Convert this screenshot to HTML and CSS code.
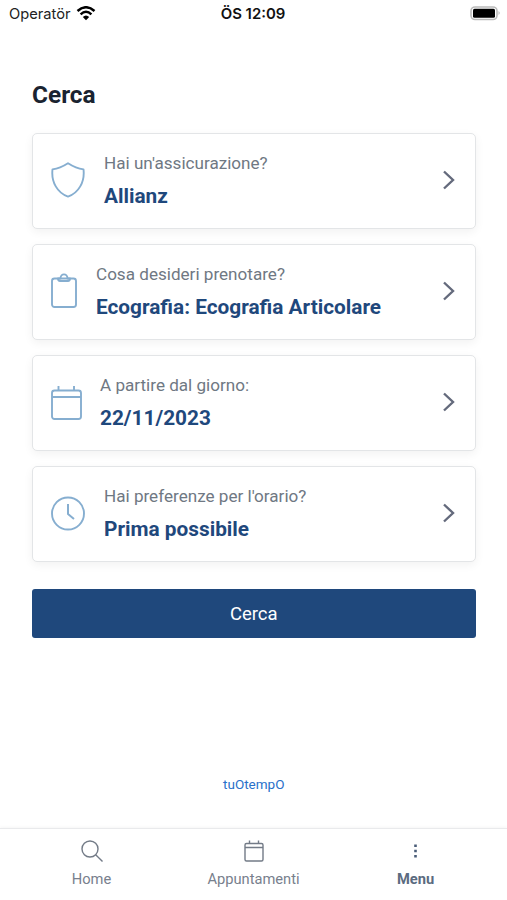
FILE: index.html
```html
<!DOCTYPE html>
<html lang="it">
<head>
<meta charset="utf-8">
<title>Cerca</title>
<link rel="stylesheet" href="styles.css">
</head>
<body>
<header class="status">
  <div class="carrier"><span>Operatör</span>
    <svg width="20" height="15" viewBox="0 0 20 15" fill="none" stroke="#000" stroke-width="2.5"><path d="M1.500 5Q10-2.500 18.500 5M4.600 8.300Q10 3.300 15.400 8.300"/><path d="M6.800 11Q10 8 13.200 11L10 14.200Z" fill="#000" stroke="none"/></svg>
  </div>
  <div class="time">ÖS 12:09</div>
  <svg class="battery" width="31" height="15" viewBox="0 0 31 15"><rect x="1" y="1" width="26" height="12.500" rx="4" fill="#fff" stroke="#bbb" stroke-width="1.600"/><rect x="3" y="2.700" width="22" height="9" rx="1.500"/><path d="M28.500 5Q31 7 28.500 9Z" fill="#bbb"/></svg>
</header>
<main>
  <h1>Cerca</h1>
  <div class="cards">
    <section class="card">
      <svg class="icon" width="34" height="36" viewBox="0 0 34 36"><path d="M17 1.200Q25 6.300 32.500 7.400C34 20 27.500 31 17 34.600C6.500 31 0 20 1.500 7.400Q9 6.300 17 1.200Z"/></svg>
      <div class="copy"><p>Hai un'assicurazione?</p><strong>Allianz</strong></div>
      <svg class="chevron" width="14" height="20" viewBox="0 0 14 20"><path d="M2 1.500L11 10L2 18.500"/></svg>
    </section>
    <section class="card">
      <svg class="icon" width="26" height="36" viewBox="0 0 26 36"><rect x="1" y="5.500" width="24" height="28.500" rx="2.500"/><path d="M7 5.500Q7 8 9 8H17Q19 8 19 5.500H16.500C16.500 0 9.500 0 9.500 5.500Z"/></svg>
      <div class="copy"><p>Cosa desideri prenotare?</p><strong>Ecografia: Ecografia Articolare</strong></div>
      <svg class="chevron" width="14" height="20" viewBox="0 0 14 20"><path d="M2 1.500L11 10L2 18.500"/></svg>
    </section>
    <section class="card">
      <svg class="icon" width="31" height="36" viewBox="0 0 31 36"><rect x="1" y="5.500" width="29" height="28.500" rx="2.500"/><path d="M1 12H30M7.500 1V5.500M23 1V5.500"/></svg>
      <div class="copy narrow"><p>A partire dal giorno:</p><strong>22/11/2023</strong></div>
      <svg class="chevron" width="14" height="20" viewBox="0 0 14 20"><path d="M2 1.500L11 10L2 18.500"/></svg>
    </section>
    <section class="card">
      <svg class="icon" width="34" height="36" viewBox="0 0 34 36"><circle cx="17" cy="17.500" r="16"/><path d="M17 8V18L23 23" stroke-width="2"/></svg>
      <div class="copy"><p>Hai preferenze per l'orario?</p><strong>Prima possibile</strong></div>
      <svg class="chevron" width="14" height="20" viewBox="0 0 14 20"><path d="M2 1.500L11 10L2 18.500"/></svg>
    </section>
  </div>
  <button class="submit">Cerca</button>
  <a class="brand">tuOtempO</a>
</main>
<nav>
  <div class="tab"><svg width="22" height="22" viewBox="0 0 22 22"><circle cx="9" cy="9" r="8"/><path d="M14.700 14.700L21.500 21.500"/></svg><span>Home</span></div>
  <div class="tab"><svg width="22" height="22" viewBox="0 0 22 22"><rect x="2" y="3.500" width="18" height="17.500" rx="1.500"/><path d="M2 7.500H20M6.500 .5V3.500M15.500 .5V3.500"/></svg><span>Appuntamenti</span></div>
  <div class="tab active"><svg width="22" height="22" viewBox="0 0 22 22"><path d="M9.200 4.500h2.600v2.600h-2.600zM9.200 9.700h2.600v2.600h-2.600zM9.200 14.900h2.600v2.600h-2.600z"/></svg><span>Menu</span></div>
</nav>
</body>
</html>
```
FILE: styles.css
```css
* { box-sizing: border-box; }
body {
  margin: 0;
  height: 900px;
  display: flex;
  flex-direction: column;
  overflow: hidden;
  background: #fff;
  font-family: Roboto, "Liberation Sans", sans-serif;
}
.status {
  height: 28px;
  display: grid;
  grid-template-columns: 1fr auto 1fr;
  align-items: center;
  padding: 0 6px 0 9px;
  font: 14.700px/28px Inter, sans-serif;
  color: #222;
}
.carrier { display: flex; align-items: center; gap: 5px; }
.carrier svg { margin-bottom: 2px; }
.time { margin-left: -4px; font-weight: 600; font-size: 14.900px; color: #111; }
.battery { justify-self: end; margin-bottom: 1px; }
main {
  flex: 1;
  padding: 51px 31.5px 0 32px;
  display: flex;
  flex-direction: column;
}
h1 { margin: 0; font-size: 24.400px; line-height: 32px; font-weight: 700; color: #1a2330; }
.cards { display: grid; gap: 14.8px; margin-top: 21.500px; }
.card {
  height: 96.400px;
  display: flex;
  align-items: center;
  padding: 0 19px 0 18px;
  border: 1.500px solid #e3e5e7;
  border-radius: 5px;
  background: #fff;
  box-shadow: 0 3px 10px rgba(0, 0, 0, .055);
}
.icon { flex: none; margin-bottom: 1px; fill: none; stroke: #86aed0; stroke-width: 1.900; stroke-linejoin: round; }
.copy { flex: 1; margin-left: 19px; padding-top: 2px; }
.copy.narrow { margin-left: 18px; }
.copy p { margin: 0; font-size: 17.100px; line-height: 28px; color: #6f7883; }
.copy strong { display: block; font-size: 20.800px; line-height: 38px; color: #1f487c; }
.chevron { margin-bottom: 2px; fill: none; stroke: #646a7c; stroke-width: 2.400; }
.submit {
  margin: 26.500px 0 0;
  height: 49px;
  padding: 2px 0 0;
  border: 0;
  border-radius: 3px;
  background: #1f487c;
  color: #fff;
  font: 18.500px Roboto, sans-serif;
}
.brand { align-self: center; margin-top: 135px; font-size: 13.500px; line-height: 22px; color: #2870ca; }
nav {
  height: 72px;
  display: flex;
  justify-content: center;
  border-top: 1px solid #e9eaec;
  box-shadow: 0 -1px 3px rgba(0, 0, 0, .04);
}
.tab {
  width: 162px;
  display: flex;
  flex-direction: column;
  align-items: center;
  padding-top: 11px;
  font-size: 14.700px;
  line-height: 20px;
  color: #78808d;
}
.tab span { margin-top: 7px; }
.tab svg { fill: none; stroke: #737b87; stroke-width: 1.400; }
.tab.active { font-weight: 700; color: #5b6b80; }
.tab.active svg { fill: #4a5d78; stroke: none; }
```
